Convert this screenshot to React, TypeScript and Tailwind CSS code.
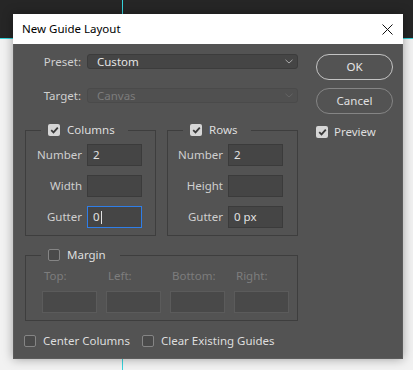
import React from "react";

const FONT = '"Noto Sans", "Open Sans", Arial, sans-serif';

function Check({ checked }: { checked: boolean }) {
  if (checked) {
    return (
      <span className="flex h-[12px] w-[12px] items-center justify-center rounded-[2px] bg-[#d6d6d6]">
        <svg width="9" height="8" viewBox="0 0 9 8">
          <path d="M1.2 4.2 L3.5 6.4 L7.8 1.6" fill="none" stroke="#3a3a3a" strokeWidth="1.8" />
        </svg>
      </span>
    );
  }
  return <span className="block h-[12px] w-[12px] rounded-[2px] border border-[#858585] bg-[#4a4a4a]" />;
}

function Field({
  label,
  value,
  focused,
  labelW,
}: {
  label: string;
  value?: string;
  focused?: boolean;
  labelW: string;
}) {
  return (
    <div className="flex items-center gap-[5px]">
      <span className={`${labelW} text-right text-[11.5px] leading-[14px] text-[#cfcfcf]`}>{label}</span>
      <div
        className={`flex h-[22px] w-[55px] items-center pl-[5px] text-[11.5px] text-[#e2e2e2] bg-[#454545] border ${
          focused ? "border-[#2f7ee8]" : "border-[#3b3b3b]"
        }`}
      >
        {value}
        {focused && <span className="ml-px inline-block h-[13px] w-px bg-[#e2e2e2]" />}
      </div>
    </div>
  );
}

function Legend({ label, checked, pr }: { label: string; checked: boolean; pr: string }) {
  return (
    <legend className={`ml-[15px] pl-[7px] ${pr}`}>
      <span className="flex h-[14px] items-center gap-[7px]">
        <Check checked={checked} />
        <span className="text-[11.5px] leading-[14px] text-[#dedede]">{label}</span>
      </span>
    </legend>
  );
}

function Dropdown({ text, disabled }: { text: string; disabled?: boolean }) {
  return (
    <div
      className={`flex h-[15px] w-[211px] items-center justify-between rounded-[3px] border pl-[9px] pr-[4px] ${
        disabled ? "border-[#4a4a4a] bg-[#505050] text-[#7c7c7c]" : "border-[#3c3c3c] bg-[#454545] text-[#e4e4e4]"
      }`}
    >
      <span className="text-[11.5px] leading-[14px]">{text}</span>
      <svg width="8" height="5" viewBox="0 0 8 5">
        <path d="M0.5 0.8 L4 4 L7.5 0.8" fill="none" stroke={disabled ? "#646464" : "#a8a8a8"} strokeWidth="1" />
      </svg>
    </div>
  );
}

export default function App() {
  return (
    <div className="relative h-[370px] w-[413px] overflow-hidden bg-[#f2f2f2]" style={{ fontFamily: FONT }}>
      <div className="absolute left-0 top-0 h-[38px] w-full bg-[#262626]" />
      <div className="absolute left-0 top-[38px] h-px w-full bg-[#36d4dc]" />
      <div className="absolute left-[122px] top-0 h-full w-px bg-[#36d4dc]" />

      <div className="relative pl-[13px] pt-[14px]">
        <div className="flex w-[390px] flex-col shadow-[0_0_10px_rgba(0,0,0,0.35)]">
          <div className="flex h-[30px] items-center justify-between bg-white pl-[9px] pr-[10px]">
            <span className="text-[11.5px] leading-[14px] text-black">New Guide Layout</span>
            <svg width="11" height="11" viewBox="0 0 11 11">
              <path d="M0.5 0.5 L10.5 10.5 M10.5 0.5 L0.5 10.5" stroke="#111" strokeWidth="1" />
            </svg>
          </div>

          <div className="flex h-[315px] gap-[18px] border border-t-0 border-[#5c5c5c] bg-[#535353] pl-[11px] pt-[10px]">
            {/* left column */}
            <div className="flex w-[273px] flex-col">
              <div className="flex h-[15px] items-center gap-[6px]">
                <span className="w-[56px] text-right text-[11.5px] leading-[14px] text-[#cfcfcf]">Preset:</span>
                <Dropdown text="Custom" />
              </div>
              <div className="mt-[19px] flex h-[15px] items-center gap-[6px]">
                <span className="w-[56px] text-right text-[11.5px] leading-[14px] text-[#cfcfcf]">Target:</span>
                <Dropdown text="Canvas" disabled />
              </div>

              <div className="mt-[20px] flex gap-[11px]">
                <fieldset className="w-[131px] border border-[#3e3e3e] pb-[7px] pt-[7px]">
                  <Legend label="Columns" checked pr="pr-[13px]" />
                  <div className="flex flex-col gap-[9px]">
                    <Field label="Number" value="2" labelW="w-[56px]" />
                    <Field label="Width" labelW="w-[56px]" />
                    <Field label="Gutter" value="0" focused labelW="w-[56px]" />
                  </div>
                </fieldset>
                <fieldset className="w-[131px] border border-[#3e3e3e] pb-[7px] pt-[7px]">
                  <Legend label="Rows" checked pr="pr-[14px]" />
                  <div className="flex flex-col gap-[9px]">
                    <Field label="Number" value="2" labelW="w-[55px]" />
                    <Field label="Height" labelW="w-[55px]" />
                    <Field label="Gutter" value="0 px" labelW="w-[55px]" />
                  </div>
                </fieldset>
              </div>

              <fieldset className="mt-[12px] w-[273px] border border-[#3e3e3e] pb-[7px] pt-[7px]">
                <Legend label="Margin" checked={false} pr="pr-[14px]" />
                <div className="flex gap-[9px] pl-[16px]">
                  {["Top:", "Left:", "Bottom:", "Right:"].map((l) => (
                    <div key={l} className="flex w-[55px] flex-col gap-[8px]">
                      <span className="pl-[2px] text-[11.5px] leading-[14px] text-[#7d7d7d]">{l}</span>
                      <div className="h-[22px] w-[55px] border border-[#5b5b5b] bg-[#494949]" />
                    </div>
                  ))}
                </div>
              </fieldset>

              <div className="-ml-px mt-[13px] flex items-center">
                <Check checked={false} />
                <span className="ml-[7px] text-[11.5px] leading-[14px] text-[#dedede]">Center Columns</span>
                <span className="ml-[12px]">
                  <Check checked={false} />
                </span>
                <span className="ml-[7px] text-[11.5px] leading-[14px] text-[#dedede]">Clear Existing Guides</span>
              </div>
            </div>

            {/* right column */}
            <div className="flex w-[77px] flex-col">
              <div className="flex h-[26px] items-center justify-center rounded-full border-[1.5px] border-[#c4c4c4] text-[11.5px] text-[#e6e6e6]">
                OK
              </div>
              <div className="mt-[8px] flex h-[26px] items-center justify-center rounded-full border border-[#858585] text-[11.5px] text-[#e0e0e0]">
                Cancel
              </div>
              <div className="mt-[11px] flex items-center gap-[6px]">
                <Check checked />
                <span className="text-[11.5px] leading-[14px] text-[#dedede]">Preview</span>
              </div>
            </div>
          </div>
        </div>
      </div>
    </div>
  );
}
